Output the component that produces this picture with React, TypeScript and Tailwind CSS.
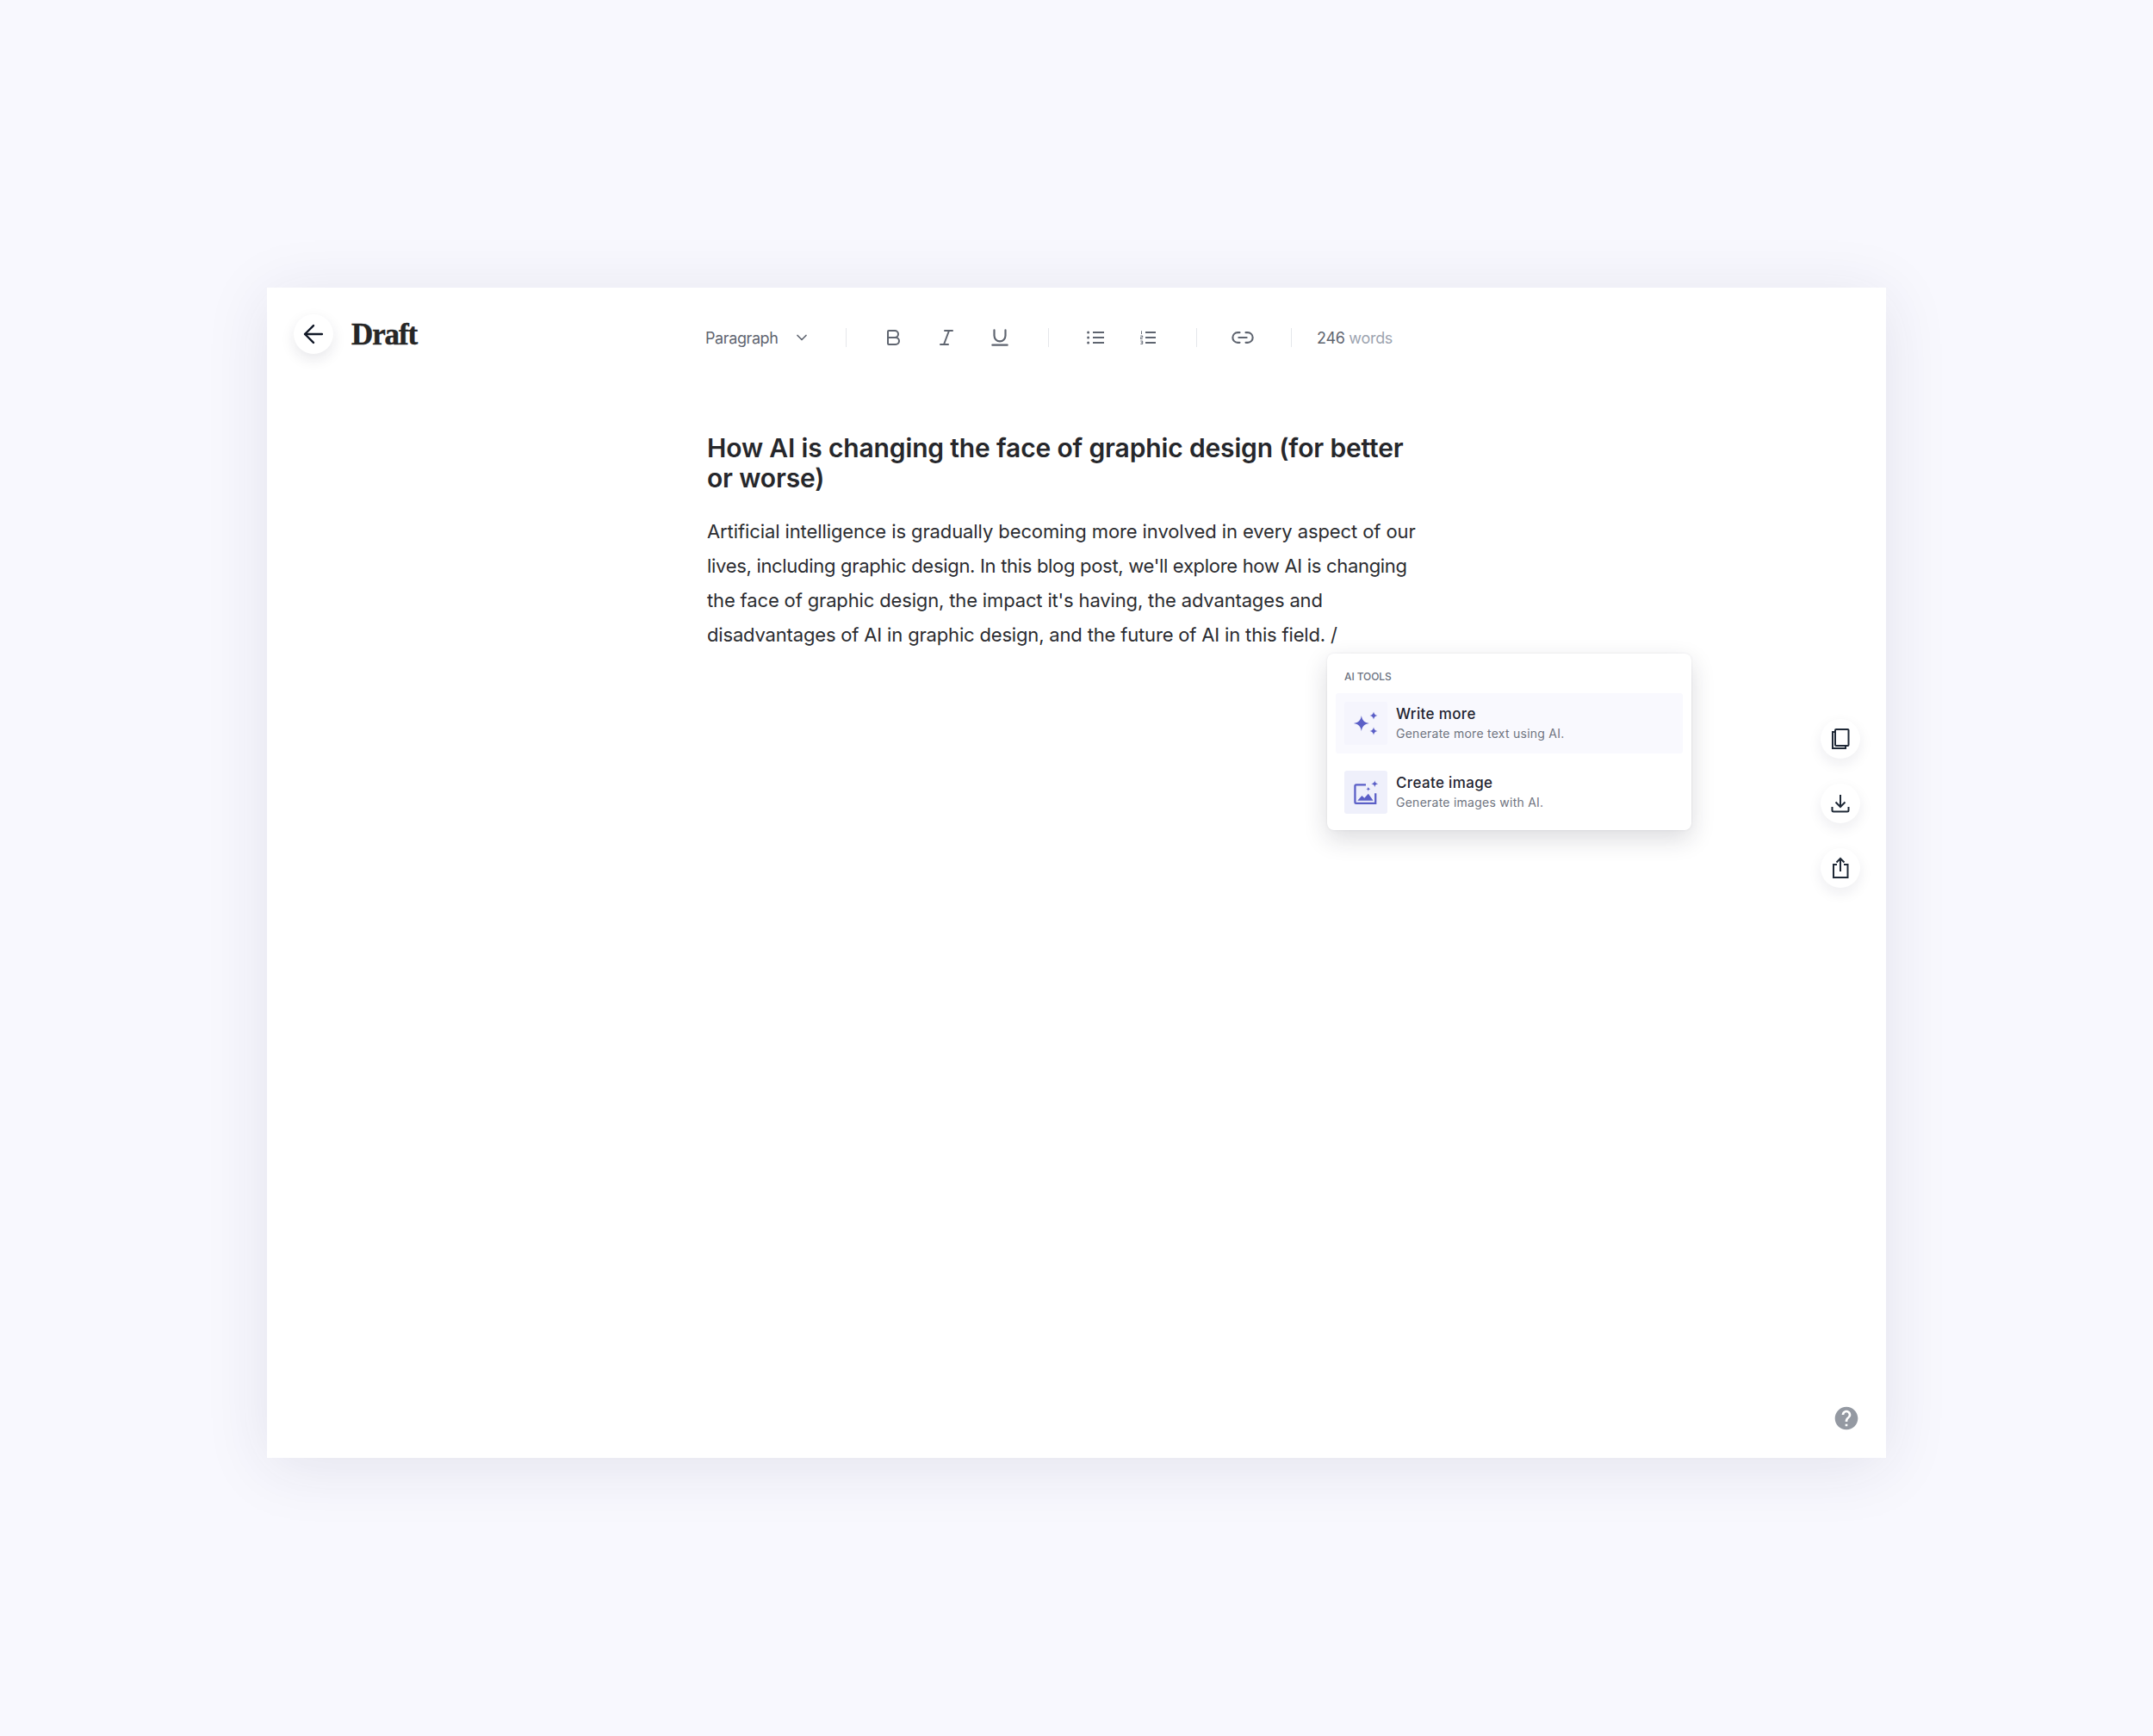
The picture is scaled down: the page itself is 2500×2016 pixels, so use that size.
import { ArrowLeft, Bold, ChevronDown, Italic, Link2, Underline } from 'lucide-react';
import { MdHelp } from 'react-icons/md';

const FONT = "font-['Inter','Noto_Sans',sans-serif]";

function Divider({ className }: { className: string }) {
  return <div className={`h-[22px] w-px bg-[#e5e7eb] ${className}`} />;
}

function BulletList() {
  return (
    <svg width="20" height="16" viewBox="0 0 20 16" fill="none" stroke="currentColor" strokeWidth="1.8">
      <path d="M7 2 H20 M7 8 H20 M7 14 H20" />
      <circle cx="1.6" cy="2" r="1.5" fill="currentColor" stroke="none" />
      <circle cx="1.6" cy="8" r="1.5" fill="currentColor" stroke="none" />
      <circle cx="1.6" cy="14" r="1.5" fill="currentColor" stroke="none" />
    </svg>
  );
}

function OrderedList() {
  return (
    <svg width="18" height="16" viewBox="0 0 18 16" fill="none" stroke="currentColor">
      <path d="M6 2 H18 M6 8 H18 M6 14 H18" strokeWidth="1.8" />
      <path d="M1.5 0.3 V4 M0.3 6 H2.7 V7.8 H0.3 V9.6 H2.7 M0.3 12 H2.7 V15.6 H0.3 M0.8 13.8 H2.7" strokeWidth="0.9" />
    </svg>
  );
}

function Sparkles({ size }: { size: number }) {
  return (
    <svg width={size} height={size} viewBox="0 0 28 28" fill="#5b5fc7">
      <path d="M10 7 C10.8 11.5 12.5 13.2 17 14 C12.5 14.8 10.8 16.5 10 21 C9.2 16.5 7.5 14.8 3 14 C7.5 13.2 9.2 11.5 10 7Z" />
      <path d="M21 3.5 C21.4 5.7 22.3 6.6 24.5 7 C22.3 7.4 21.4 8.3 21 10.5 C20.6 8.3 19.7 7.4 17.5 7 C19.7 6.6 20.6 5.7 21 3.5Z" />
      <path d="M21 17.5 C21.4 19.7 22.3 20.6 24.5 21 C22.3 21.4 21.4 22.3 21 24.5 C20.6 22.3 19.7 21.4 17.5 21 C19.7 20.6 20.6 19.7 21 17.5Z" />
    </svg>
  );
}

function ImageSpark({ size }: { size: number }) {
  return (
    <svg width={size} height={size} viewBox="0 0 28 28" fill="none">
      <path d="M14 6.5 H4.2 A1.2 1.2 0 0 0 3 7.7 V24 A1.2 1.2 0 0 0 4.2 25.2 H23.8 V15" stroke="#5b5fc7" strokeWidth="2" />
      <path d="M5.5 22.5 L10 17.5 L12.5 19.8 L16.5 15.5 L21.5 22.5Z" fill="#5b5fc7" />
      <path d="M23 2 C23.3 4.3 24.2 5.2 26.5 5.5 C24.2 5.8 23.3 6.7 23 9 C22.7 6.7 21.8 5.8 19.5 5.5 C21.8 5.2 22.7 4.3 23 2Z" fill="#5b5fc7" />
      <path d="M16.5 8.5 C16.7 10 17.3 10.6 18.8 10.8 C17.3 11 16.7 11.6 16.5 13.1 C16.3 11.6 15.7 11 14.2 10.8 C15.7 10.6 16.3 10 16.5 8.5Z" fill="#5b5fc7" />
    </svg>
  );
}

function CopyIcon() {
  return (
    <svg width="22" height="26" viewBox="0 0 22 26" fill="none" stroke="#1f2937" strokeWidth="2">
      <rect x="5" y="2" width="15.5" height="19" rx="1" />
      <path d="M5 5 H2 V24 H17 V21" />
    </svg>
  );
}

function DownloadIcon() {
  return (
    <svg width="22" height="24" viewBox="0 0 22 24" fill="none" stroke="#1f2937" strokeWidth="2">
      <path d="M11 2 V16 M5.5 10.5 L11 16 L16.5 10.5" />
      <path d="M1.5 16 V20 A1.5 1.5 0 0 0 3 21.5 H19 A1.5 1.5 0 0 0 20.5 20 V16" />
    </svg>
  );
}

function ShareIcon() {
  return (
    <svg width="20" height="26" viewBox="0 0 20 26" fill="none" stroke="#1f2937" strokeWidth="2">
      <path d="M6 9 H2 V24 H18.5 V9 H14" />
      <path d="M10 17 V2 M5.5 6.5 L10 2 L14.5 6.5" />
    </svg>
  );
}

function FloatButton({ children }: { children: React.ReactNode }) {
  return (
    <button className="flex h-[46px] w-[46px] items-center justify-center rounded-full bg-white shadow-[0_6px_16px_rgba(30,30,60,0.08)]">
      {children}
    </button>
  );
}

function MenuRow({ icon, iconBg, title, sub, active }: { icon: React.ReactNode; iconBg: string; title: string; sub: string; active?: boolean }) {
  return (
    <div className={`flex h-[70px] items-center gap-[10px] rounded-[3px] px-[10px] ${active ? 'bg-[#f9f9fe]' : ''}`}>
      <div className={`flex h-[50px] w-[50px] items-center justify-center rounded-[3px] ${iconBg}`}>{icon}</div>
      <div className="pt-[1px]">
        <div className="text-[17px] leading-[22px] font-medium tracking-[0.35px] text-[#1f2430]">{title}</div>
        <div className="text-[14px] leading-[23px] tracking-[0.25px] text-[#6f7480]">{sub}</div>
      </div>
    </div>
  );
}

export default function App() {
  return (
    <div className={`h-[2016px] overflow-hidden bg-[#f8f8fe] pt-[334px] ${FONT}`}>
      <div className="relative ml-[310px] h-[1359px] w-[1880px] bg-white shadow-[0_10px_70px_rgba(40,40,80,0.1)]">
        {/* Header */}
        <div className="flex h-[116px] items-center pb-[8px] pl-[31px]">
          <button className="flex h-[46px] w-[46px] items-center justify-center rounded-full bg-white shadow-[0_6px_16px_rgba(30,30,60,0.1)]">
            <ArrowLeft size={34} strokeWidth={1.7} className="text-[#111827]" />
          </button>
          <span className="mt-[2px] ml-[21px] w-[411px] font-['Liberation_Serif',serif] text-[35px] font-bold tracking-[-1.1px] text-[#262626] [-webkit-text-stroke:0.5px_#262626]">Draft</span>

          {/* Toolbar */}
          <div className="mt-[8px] flex items-center text-[#5f6570]">
            <span className="w-[84px] text-[18px] tracking-[-0.4px]">Paragraph</span>
            <ChevronDown size={20} strokeWidth={2} className="ml-[18px]" />
            <Divider className="ml-[41px]" />
            <Bold size={24} strokeWidth={2} className="ml-[42px]" />
            <Italic size={24} strokeWidth={2} className="ml-[38px]" />
            <Underline size={26} strokeWidth={2} className="ml-[37px]" />
            <Divider className="ml-[43px]" />
            <div className="ml-[44px]"><BulletList /></div>
            <div className="ml-[42px]"><OrderedList /></div>
            <Divider className="ml-[47px]" />
            <Link2 size={28} strokeWidth={1.8} className="ml-[39px]" />
            <Divider className="ml-[42px]" />
            <span className="ml-[29px] text-[18px] tracking-[-0.3px]">
              246 <span className="text-[#9ca3af]">words</span>
            </span>
          </div>
        </div>

        {/* Document */}
        <div className="relative ml-[511px] w-[840px] pt-[53px]">
          <h1 className="w-[830px] text-[30px] leading-[35px] font-semibold tracking-[-0.15px] text-[#26272b]">
            How AI is changing the face of graphic design (for better or worse)
          </h1>
          <p className="mt-[24px] text-[22px] leading-[40px] tracking-[-0.1px] whitespace-nowrap text-[#2b2c30]">
            Artificial intelligence is gradually becoming more involved in every aspect of our
            <br />
            <span className="tracking-[-0.31px]">lives, including graphic design. In this blog post, we'll explore how AI is changing</span>
            <br />
            <span className="tracking-[-0.15px]">the face of graphic design, the impact it's having, the advantages and</span>
            <br />
            <span className="tracking-[-0.17px]">disadvantages of AI in graphic design, and the future of AI in this field. /</span>
          </p>

          {/* AI tools menu */}
          <div className="absolute top-[309px] left-[720px] w-[423px] rounded-[8px] bg-white px-[10px] pt-[18px] pb-[9px] shadow-[0_10px_28px_rgba(30,30,50,0.16),0_0_3px_rgba(30,30,50,0.08)]">
            <div className="px-[10px] text-[12px] leading-[18px] font-medium tracking-[-0.1px] text-[#6b7280]">AI TOOLS</div>
            <div className="mt-[10px] flex flex-col gap-[10px]">
              <MenuRow active icon={<Sparkles size={36} />} iconBg="bg-[#f5f5fd]" title="Write more" sub="Generate more text using AI." />
              <MenuRow icon={<ImageSpark size={32} />} iconBg="bg-[#eff0fb]" title="Create image" sub="Generate images with AI." />
            </div>
          </div>
        </div>

        {/* Floating actions */}
        <div className="absolute top-[501px] right-[30px] flex flex-col gap-[29px]">
          <FloatButton><CopyIcon /></FloatButton>
          <FloatButton><DownloadIcon /></FloatButton>
          <FloatButton><ShareIcon /></FloatButton>
        </div>

        <MdHelp size={32} className="absolute right-[30px] bottom-[30px] text-[#9499a2]" />
      </div>
    </div>
  );
}
